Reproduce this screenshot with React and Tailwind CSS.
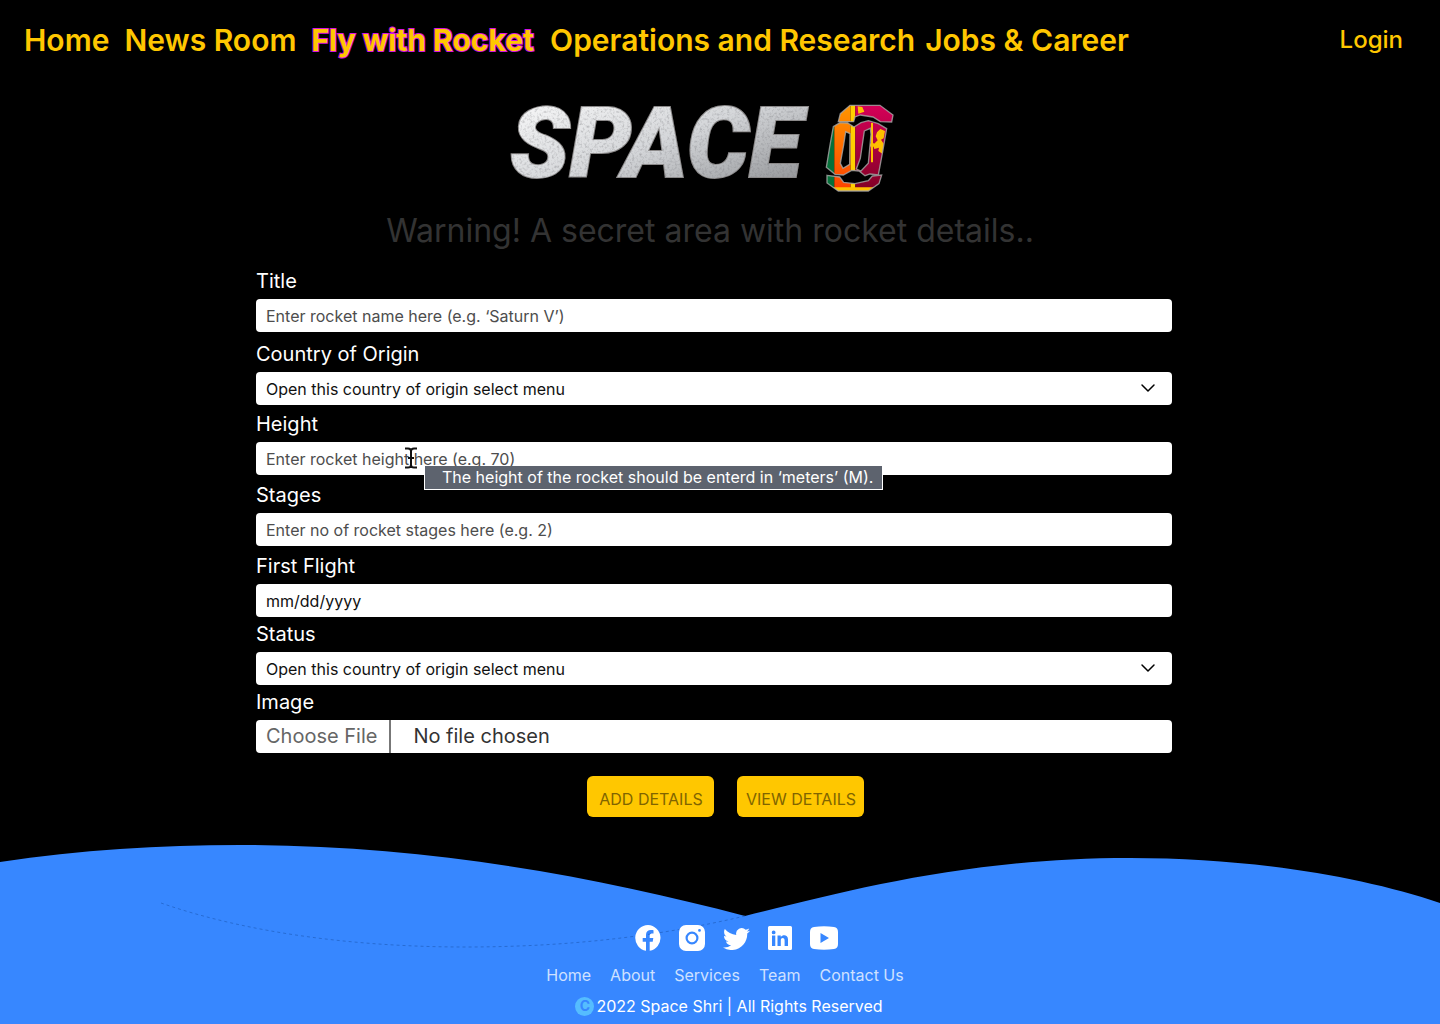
import React from "react";
import { ChevronDown } from "lucide-react";

const primaryLinks = [
  { label: "Home" },
  { label: "News Room" },
  { label: "Fly with Rocket", active: true },
];
const secondaryLinks = [{ label: "Operations and Research" }, { label: "Jobs & Career" }];
const footerLinks = ["Home", "About", "Services", "Team", "Contact Us"];

function NavLink({ label, active }) {
  return (
    <a
      href="#"
      className={
        active
          ? "font-bold [-webkit-text-stroke:2px_#d414e0] [paint-order:stroke_fill]"
          : "font-semibold"
      }
    >
      {label}
    </a>
  );
}

function Header() {
  return (
    <header className="flex items-center justify-between pt-5 pr-[37px] pl-6 text-[#ffc700]">
      <nav className="flex flex-wrap gap-x-4 text-[30px] leading-10 whitespace-nowrap">
        <div className="flex gap-x-[15px]">
          {primaryLinks.map((l) => (
            <NavLink key={l.label} {...l} />
          ))}
        </div>
        <div className="flex gap-x-2.5">
          {secondaryLinks.map((l) => (
            <NavLink key={l.label} {...l} />
          ))}
        </div>
      </nav>
      <a href="#" className="text-2xl leading-10 font-medium">
        Login
      </a>
    </header>
  );
}

function Logo() {
  return (
    <svg
      viewBox="0 0 384 94"
      className="h-[94px] w-[384px] overflow-visible"
      role="img"
      aria-label="Space Shri"
    >
      <defs>
        <linearGradient id="steel" x1="0" y1="0" x2="1" y2="1">
          <stop offset="0" stopColor="#ffffff" />
          <stop offset="0.5" stopColor="#d4d6d9" />
          <stop offset="1" stopColor="#85878a" />
        </linearGradient>
        <linearGradient id="saffron" x1="0" y1="0" x2="0" y2="1">
          <stop offset="0" stopColor="#ff9a00" />
          <stop offset="1" stopColor="#ff3c00" />
        </linearGradient>
        <linearGradient id="maroon" x1="0" y1="0" x2="0" y2="1">
          <stop offset="0" stopColor="#d8005a" />
          <stop offset="1" stopColor="#7d0022" />
        </linearGradient>
        <filter id="scratch" x="-0.1" y="-0.2" width="1.2" height="1.4">
          <feTurbulence type="fractalNoise" baseFrequency="0.4" numOctaves="3" seed="4" />
          <feColorMatrix values="0 0 0 0 0.2  0 0 0 0 0.2  0 0 0 0 0.22  1.2 0 0 0 -0.55" />
          <feComposite in2="SourceGraphic" operator="in" result="grain" />
          <feMerge>
            <feMergeNode in="SourceGraphic" />
            <feMergeNode in="grain" />
          </feMerge>
        </filter>
        <path
          id="emblem-shape"
          clipRule="evenodd"
          fillRule="evenodd"
          d="M70 80L76 56L105 31H195L234 60L230 81L196 80L174 66L136 60L120 66L116 80ZM55 95L75 83L98 84L117 96L138 83L160 77L190 86L215 101L203 170L190 240L165 237L150 242L132 228L110 226L85 240L60 238L34 217L45 150ZM92 110L105 116L104 208L84 220L76 205L86 150ZM148 108L166 100L168 118L160 205L138 228L124 222L136 190ZM36 241L74 246L86 262L120 266L160 257L172 243L200 240L192 266L160 288H70L36 264Z"
        />
        <clipPath id="emblem">
          <use href="#emblem-shape" clipRule="evenodd" />
        </clipPath>
      </defs>
      <text
        x="0"
        y="76"
        fill="url(#steel)"
        stroke="#8c8a8a"
        strokeWidth="2"
        paintOrder="stroke"
        filter="url(#scratch)"
        className="font-['Roboto',sans-serif] text-[98px] font-black italic"
      >
        SPACE
      </text>
      <g transform="translate(305 -6) scale(0.3333)">
        <g clipPath="url(#emblem)">
          <path fill="#07703a" d="M20 20h38v280H20z" />
          <path fill="url(#saffron)" d="M58 20h49v280H58z" />
          <path fill="#ffd000" d="M107 20h14v280h-14z" />
          <path fill="url(#maroon)" d="M121 20h130v280H121z" />
          <path
            fill="#ffc000"
            d="M20 277h220v14H20zM128 34l14 2 6 14-18 6zM168 84h6v60l8 4-8 8v46h-6v-46l-8-6 8-6zM186 112l10-10 14 6-4 22-8 4 8 12-4 30-12-8 2-10-14 4-4-12 14-14-6-12z"
          />
        </g>
        <use
          href="#emblem-shape"
          fill="none"
          stroke="#a9a9a9"
          strokeWidth="4"
          strokeOpacity="0.8"
        />
      </g>
    </svg>
  );
}

const control =
  "h-[33px] w-full rounded-sm bg-white pl-2.5 text-base leading-6 outline-none";

function Field({ id, label, children }) {
  return (
    <div>
      <label htmlFor={id} className="mb-1 block text-xl leading-7">
        {label}
      </label>
      {children}
    </div>
  );
}

function SelectBox({ id }) {
  return (
    <div className="relative">
      <select id={id} className={control + " appearance-none pr-10 text-[#111]"}>
        <option>Open this country of origin select menu</option>
      </select>
      <ChevronDown
        aria-hidden="true"
        strokeWidth={1.5}
        className="pointer-events-none absolute top-1 right-3 size-6 text-black"
      />
    </div>
  );
}

function TextCursor() {
  return (
    <svg
      viewBox="0 0 14 22"
      aria-hidden="true"
      className="absolute top-[5px] left-[148px] h-[22px] w-3.5"
      fill="none"
      stroke="#111"
      strokeWidth="2"
    >
      <path d="M1 1.500H4Q7 1.500 7 4V18Q7 20.500 4 20.500H1M13 1.500H10Q7 1.500 7 4M7 18Q7 20.500 10 20.500H13M4 11H10" />
    </svg>
  );
}

function RocketForm() {
  return (
    <form className="mt-4 w-full max-w-[916px] text-white">
      <div className="flex flex-col gap-2">
        <Field id="title" label="Title">
          <input
            id="title"
            type="text"
            placeholder="Enter rocket name here (e.g. ‘Saturn V’)"
            className={control + " text-black placeholder:text-[#4d4d4d]"}
          />
        </Field>
        <Field id="country" label="Country of Origin">
          <SelectBox id="country" />
        </Field>
      </div>
      <div className="mt-[5px] flex flex-col gap-1.5">
        <Field id="height" label="Height">
          <div className="relative">
            <input
              id="height"
              type="text"
              aria-describedby="height-tip"
              placeholder="Enter rocket height here (e.g. 70)"
              className={control + " text-black placeholder:text-[#4d4d4d]"}
            />
            <TextCursor />
            <div
              id="height-tip"
              role="tooltip"
              className="absolute top-6 left-[168px] border border-t-0 border-white bg-[#5d636e] pr-[9px] pl-[17px] text-base leading-[23px] whitespace-nowrap"
            >
              The height of the rocket should be enterd in ‘meters’ (M).
            </div>
          </div>
        </Field>
        <Field id="stages" label="Stages">
          <input
            id="stages"
            type="text"
            placeholder="Enter no of rocket stages here (e.g. 2)"
            className={control + " text-black placeholder:text-[#4d4d4d]"}
          />
        </Field>
        <Field id="flight" label="First Flight">
          <input
            id="flight"
            type="date"
            className={
              control +
              " text-[#111] [&::-webkit-calendar-picker-indicator]:hidden [&::-webkit-datetime-edit-day-field]:p-0 [&::-webkit-datetime-edit-month-field]:p-0 [&::-webkit-datetime-edit-year-field]:p-0"
            }
          />
        </Field>
      </div>
      <div className="mt-[3px] flex flex-col gap-[3px]">
        <Field id="status" label="Status">
          <SelectBox id="status" />
        </Field>
        <Field id="image" label="Image">
          <input
            id="image"
            type="file"
            className="h-[33px] w-full rounded-sm bg-white text-xl leading-[33px] text-[#333] file:mr-[22px] file:h-[33px] file:border-r-2 file:border-[#777] file:pr-3 file:pl-2.5 file:text-[#666]"
          />
        </Field>
      </div>
      <div className="mt-[23px] flex justify-center gap-[23px] pl-[22px]">
        {["ADD DETAILS", "VIEW DETAILS"].map((t) => (
          <button
            key={t}
            type="button"
            className="h-[41px] w-[127px] rounded-md bg-[#ffc700] pt-1 pl-0.5 text-base whitespace-nowrap text-[#806400]"
          >
            {t}
          </button>
        ))}
      </div>
    </form>
  );
}

const social = [
  {
    name: "Facebook",
    box: "0 0 26 26",
    size: "h-[26px] w-[26px]",
    d: "M13 0a13 13 0 0 0-2 25.800V16.700H7.700V13H11v-2.900c0-3.300 2-5 4.900-5 1.400 0 2.600.2 2.600.2v3.100h-1.600c-1.600 0-2.200 1-2.200 2V13h3.600l-.6 3.700h-3v9.100A13 13 0 0 0 13 0z",
  },
  {
    name: "Instagram",
    box: "0 0 26 26",
    size: "h-[26px] w-[26px]",
    d: "M7 0h12a7 7 0 0 1 7 7v12a7 7 0 0 1-7 7H7a7 7 0 0 1-7-7V7a7 7 0 0 1 7-7zM13 6.500a6.500 6.500 0 1 0 0 13 6.500 6.500 0 0 0 0-13zM13 8.700a4.300 4.300 0 1 1 0 8.600 4.300 4.300 0 0 1 0-8.600zM20.500 4a1.400 1.400 0 1 0 0 2.800 1.400 1.400 0 0 0 0-2.800z",
  },
  {
    name: "Twitter",
    box: "0 1.500 24 20",
    size: "h-[23px] w-[27px]",
    d: "M23.953 4.570a10 10 0 0 1-2.825.775 4.958 4.958 0 0 0 2.163-2.723c-.951.555-2.005.959-3.127 1.184a4.920 4.920 0 0 0-8.384 4.482C7.690 8.095 4.067 6.130 1.640 3.162a4.822 4.822 0 0 0-.666 2.475c0 1.710.870 3.213 2.188 4.096a4.904 4.904 0 0 1-2.228-.616v.060a4.923 4.923 0 0 0 3.946 4.827 4.996 4.996 0 0 1-2.212.085 4.936 4.936 0 0 0 4.604 3.417 9.867 9.867 0 0 1-6.102 2.105c-.390 0-.779-.023-1.170-.067a13.995 13.995 0 0 0 7.557 2.209c9.053 0 13.998-7.496 13.998-13.985 0-.210 0-.420-.015-.630A9.935 9.935 0 0 0 24 4.590z",
  },
  {
    name: "LinkedIn",
    box: "0 0 24 24",
    size: "h-6 w-6",
    d: "M1.500 0h21A1.500 1.500 0 0 1 24 1.500v21a1.500 1.500 0 0 1-1.500 1.500h-21A1.500 1.500 0 0 1 0 22.500v-21A1.500 1.500 0 0 1 1.500 0zM4 9.500V20h3.300V9.500zM5.650 4.500a1.900 1.900 0 1 0 0 3.800 1.900 1.900 0 0 0 0-3.800zM9.500 9.500V20h3.300v-5.500c0-3.200 3.800-3.200 3.800 0V20H20v-6.500c0-5-5.300-5.300-7.200-2.500V9.500z",
  },
  {
    name: "YouTube",
    box: "0 0 28 24",
    size: "h-6 w-7",
    d: "M4 1Q14-.5 24 1Q28 1.500 28 6V18Q28 22.500 24 23Q14 24.500 4 23Q0 22.500 0 18V6Q0 1.500 4 1zM10.500 7V17L19 12z",
  },
];

function Footer() {
  return (
    <footer className="relative mt-7 flex flex-1 flex-col items-center pt-20 text-white">
      <svg
        viewBox="0 0 1440 179"
        preserveAspectRatio="none"
        aria-hidden="true"
        className="absolute inset-0 h-full w-full"
      >
        <path
          fill="#3787ff"
          d="M0 17C80 5 160 0 240 0C430 0 600 33 745 71C850 45 970 13 1130 13C1250 13 1360 31 1440 58V179H0Z"
        />
        <path
          fill="none"
          stroke="#1f5fc0"
          strokeWidth="1"
          strokeOpacity="0.7"
          strokeDasharray="3 3"
          d="M161 58C250 89 360 102 465 102C570 102 660 91 745 71"
        />
      </svg>
      <div className="relative flex h-[26px] items-center gap-[18px] pl-8">
        {social.map((s) => (
          <a key={s.name} href="#" aria-label={s.name}>
            <svg viewBox={s.box} className={s.size} fill="#fff" fillRule="evenodd">
              <path d={s.d} />
            </svg>
          </a>
        ))}
      </div>
      <nav className="relative mt-3 flex gap-[19px] pl-2.5 text-base leading-6 text-[#cfe1ff]">
        {footerLinks.map((t) => (
          <a key={t} href="#">
            {t}
          </a>
        ))}
      </nav>
      <p className="relative mt-[7px] flex items-center gap-0.5 pl-[18px] text-base leading-6">
        <span className="flex size-[19px] items-center justify-center rounded-full bg-[#55bdff] text-sm font-bold text-[#3787ff]">
          C
        </span>
        2022 Space Shri | All Rights Reserved
      </p>
    </footer>
  );
}

export default function App() {
  return (
    <div className="flex min-h-screen flex-col bg-black font-['Inter',sans-serif]">
      <Header />
      <main className="flex flex-col items-center pr-3">
        <div className="mt-[41px] pr-6">
          <Logo />
        </div>
        <h1 className="mt-4 pr-2 text-[32px] leading-10 text-[#333]">
          Warning! A secret area with rocket details..
        </h1>
        <RocketForm />
      </main>
      <Footer />
    </div>
  );
}
